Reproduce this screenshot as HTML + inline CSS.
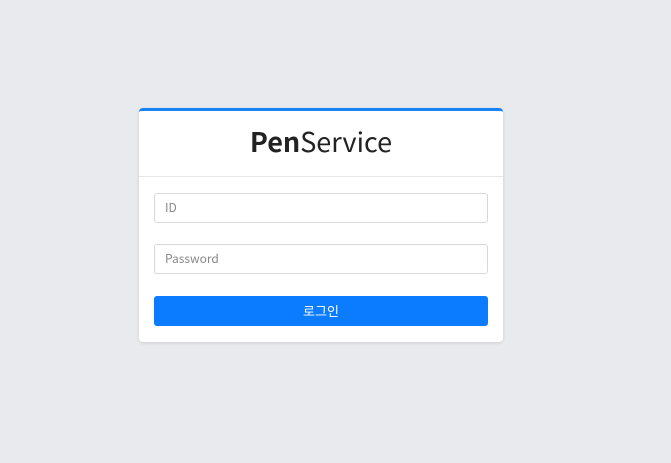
<!DOCTYPE html>
<html><head><meta charset="utf-8"><style>
html,body{margin:0;padding:0;width:671px;height:463px;background:#e9eaed;overflow:hidden;font-family:"Liberation Sans","Noto Sans CJK KR",sans-serif}
.card{position:absolute;left:139px;top:108px;width:364px;height:234px;background:#fff;border-top:3px solid #1a82f7;border-radius:4px;box-sizing:border-box;box-shadow:0 1px 3px rgba(0,0,0,.12)}
.hd{height:65px;border-bottom:1px solid #e6e6e6;text-align:center;line-height:60px;font-size:27px;color:#222;font-family:"Noto Sans CJK KR","Liberation Sans",sans-serif}
.hd b{font-weight:700}
.in{position:absolute;left:15px;width:334px;height:30px;border:1px solid #d8d8d8;border-radius:3px;box-sizing:border-box;font-size:12px;color:#888;line-height:28px;padding-left:10px;font-family:"Noto Sans CJK KR",sans-serif}
.btn{position:absolute;left:15px;top:185px;width:334px;height:30px;background:#0b7bff;border-radius:3px;color:#fff;text-align:center;line-height:30px;font-size:13px;font-family:"Noto Sans CJK KR",sans-serif}
</style></head><body>
<div class="card">
<div class="hd"><b>Pen</b>Service</div>
<div class="in" style="top:82px">ID</div>
<div class="in" style="top:133px">Password</div>
<div class="btn">로그인</div>
</div>
</body></html>
